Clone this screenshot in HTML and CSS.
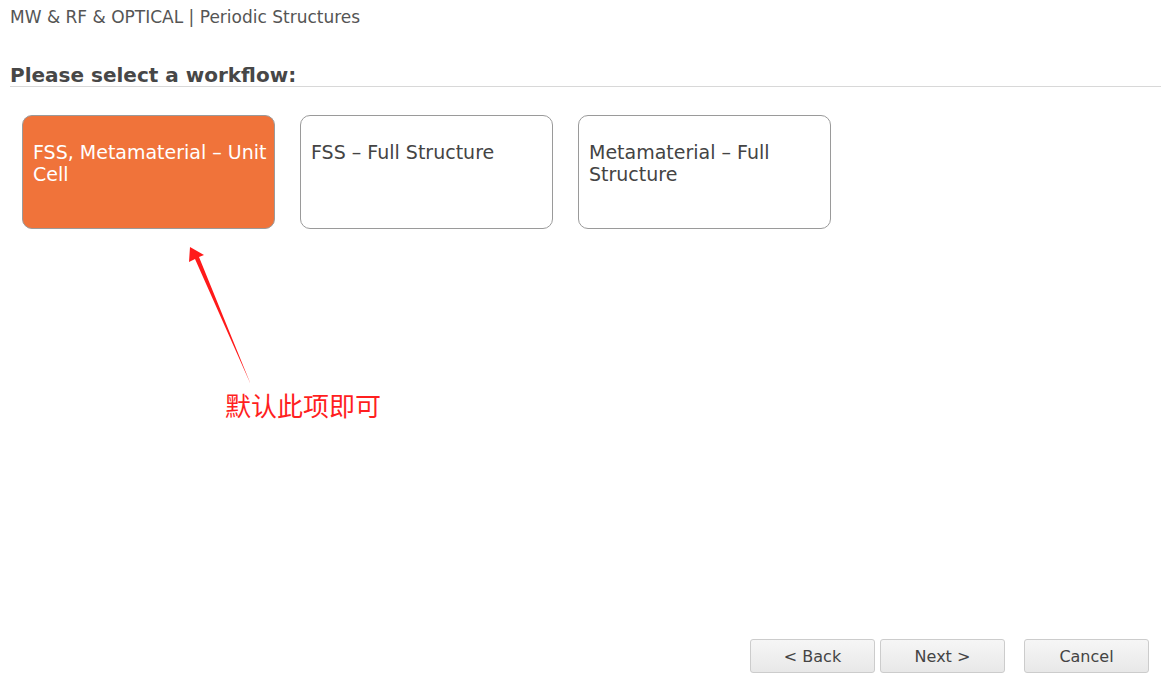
FILE: index.html
```html
<!DOCTYPE html>
<html lang="en">
<head>
<meta charset="UTF-8" />
<title>Periodic Structures</title>
<link rel="stylesheet" href="styles.css">
</head>
<body>

<div class="page">
  <div class="crumb">MW &amp; RF &amp; OPTICAL | Periodic Structures</div>

  <h2 class="title">Please select a workflow:</h2>

  <div class="cards">
    <div class="card selected">FSS, Metamaterial – Unit Cell</div>
    <div class="card">FSS – Full Structure</div>
    <div class="card">Metamaterial – Full Structure</div>
  </div>

  <div class="note-area">
    <svg class="arrow" width="80" height="150" viewBox="170 236 80 150">
      <polygon points="190,247 204,255 199,257 251,385 195,259 189,262" fill="#ff1a1a" />
    </svg>
    <div class="note">默认此项即可</div>
  </div>

  <div class="footer">
    <button class="btn">&lt; Back</button>
    <button class="btn">Next &gt;</button>
    <button class="btn cancel">Cancel</button>
  </div>
</div>

</body>
</html>
```

FILE: styles.css
```css
body {
  margin: 0;
  font-family: "DejaVu Sans", Verdana, sans-serif;
  background: #fff;
  color: #444;
}
.page {
  height: 685px;
  display: flex;
  flex-direction: column;
  padding-left: 10px;
  box-sizing: border-box;
}
.crumb {
  margin-top: 7px;
  font-size: 17px;
  line-height: 20px;
  color: #555;
}
.title {
  margin: 38px 0 0;
  font-size: 20px;
  font-weight: bold;
  color: #474747;
  line-height: 21px;
  border-bottom: 1px solid #d8d8d8;
}
.cards {
  display: flex;
  gap: 25px;
  margin: 28px 0 0 12px;
}
.card {
  width: 253px;
  height: 114px;
  box-sizing: border-box;
  border: 1px solid #9a9a9a;
  border-radius: 10px;
  padding: 25px 4px 0 10px;
  font-size: 19px;
  line-height: 22px;
  color: #444;
  background: #fff;
}
.card.selected {
  background: #f0733a;
  color: #fff;
}
.note-area {
  position: relative;
  flex: 1;
}
.arrow {
  position: absolute;
  left: 160px;
  top: 7px;
}
.note {
  position: absolute;
  left: 215px;
  top: 163px;
  font-family: "Noto Sans CJK SC", sans-serif;
  font-size: 26px;
  line-height: 26px;
  color: #ff1f1f;
}
.footer {
  display: flex;
  justify-content: flex-end;
  gap: 5px;
  padding: 0 12px 12px 0;
}
.btn {
  width: 125px;
  height: 34px;
  border: 1px solid #ccc;
  border-radius: 3px;
  background: linear-gradient(#f6f6f6, #e8e8e8);
  font-family: "DejaVu Sans", Verdana, sans-serif;
  font-size: 16px;
  color: #444;
}
.cancel {
  margin-left: 14px;
}
```
